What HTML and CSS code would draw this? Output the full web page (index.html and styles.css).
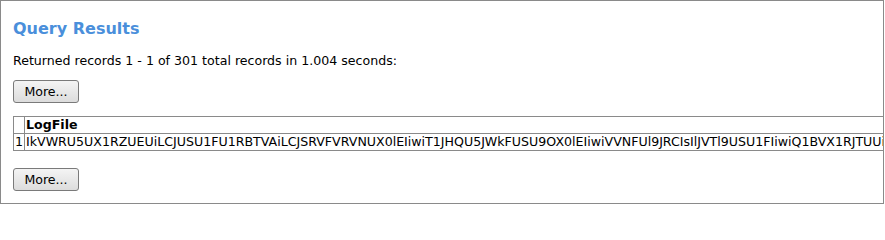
FILE: index.html
```html
<!DOCTYPE html>
<html>
<head>
<meta charset="utf-8">
<link rel="stylesheet" href="styles.css">
</head>
<body>
<div class="frame">
  <h1 class="title">Query Results</h1>
  <p class="summary">Returned records 1 - 1 of 301 total records in 1.004 seconds:</p>
  <button class="btn">More...</button>
  <div class="tablewrap">
    <table class="results">
      <tr><th class="idx"></th><th>LogFile</th></tr>
      <tr><td class="idx">1</td><td>IkVWRU5UX1RZUEUiLCJUSU1FU1RBTVAiLCJSRVFVRVNUX0lEIiwiT1JHQU5JWkFUSU9OX0lEIiwiVVNFUl9JRCIsIlJVTl9USU1FIiwiQ1BVX1RJTUUiL</td></tr>
    </table>
  </div>
  <button class="btn">More...</button>
</div>
</body>
</html>
```
FILE: styles.css
```css
html, body {
  margin: 0;
  padding: 0;
  background: #ffffff;
}
.frame {
  box-sizing: border-box;
  width: 884px;
  height: 204px;
  border: 1px solid #8a8a8a;
  overflow: hidden;
  padding: 0 0 0 12px;
  font-family: "DejaVu Sans", Verdana, sans-serif;
  font-size: 12.6px;
  color: #000;
}
.title {
  margin: 17px 0 0 0;
  font-size: 16px;
  line-height: 22px;
  font-weight: bold;
  color: #4a8fdb;
}
.summary {
  margin: 13px 0 0 0;
  line-height: 16px;
}
.btn {
  display: block;
  margin: 11px 0 0 0;
  width: 66px;
  height: 23px;
  padding: 0;
  font-family: "DejaVu Sans", Verdana, sans-serif;
  font-size: 12.6px;
  color: #000;
  border: 1px solid #7a7a7a;
  border-radius: 3px;
  background: linear-gradient(#f4f4f4, #dcdcdc);
}
.tablewrap {
  margin: 13px 0 0 0;
  white-space: nowrap;
  overflow: hidden;
}
.results {
  border-collapse: collapse;
}
.results th, .results td {
  border: 1px solid #8a8a8a;
  padding: 0 1px;
  height: 16px;
  text-align: left;
  line-height: 16px;
}
.results th {
  font-weight: bold;
}
.results .idx {
  width: 8px;
}
.tablewrap + .btn {
  margin-top: 17px;
}
```
